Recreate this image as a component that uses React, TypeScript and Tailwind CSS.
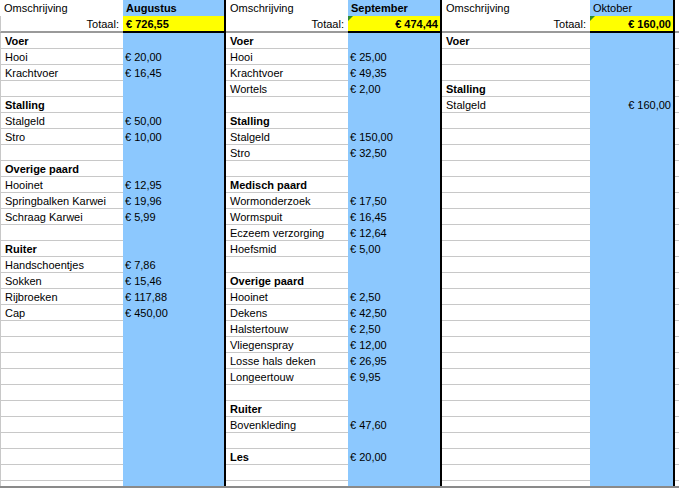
import React from 'react';

type Row = { label?: string; amount?: string; bold?: boolean };

interface Group {
  month: string;
  monthBold: boolean;
  total: string;
  totalRight: boolean;
  marker: boolean;
  descW: string;
  amtW: string;
  amountRight: boolean;
  leftLine: boolean;
  rows: Row[];
}

const h = (label: string): Row => ({ label, bold: true });
const r = (label: string, amount?: string): Row => ({ label, amount });
const e: Row = {};

const groups: Group[] = [
  {
    month: 'Augustus',
    monthBold: true,
    total: '€ 726,55',
    totalRight: false,
    marker: false,
    descW: 'w-[123px]',
    amtW: 'w-[101px]',
    amountRight: false,
    leftLine: true,
    rows: [
      h('Voer'),
      r('Hooi', '€ 20,00'),
      r('Krachtvoer', '€ 16,45'),
      e,
      h('Stalling'),
      r('Stalgeld', '€ 50,00'),
      r('Stro', '€ 10,00'),
      e,
      h('Overige paard'),
      r('Hooinet', '€ 12,95'),
      r('Springbalken Karwei', '€ 19,96'),
      r('Schraag Karwei', '€ 5,99'),
      e,
      h('Ruiter'),
      r('Handschoentjes', '€ 7,86'),
      r('Sokken', '€ 15,46'),
      r('Rijbroeken', '€ 117,88'),
      r('Cap', '€ 450,00'),
    ],
  },
  {
    month: 'September',
    monthBold: true,
    total: '€ 474,44',
    totalRight: true,
    marker: true,
    descW: 'w-[122px]',
    amtW: 'w-[92px]',
    amountRight: false,
    leftLine: false,
    rows: [
      h('Voer'),
      r('Hooi', '€ 25,00'),
      r('Krachtvoer', '€ 49,35'),
      r('Wortels', '€ 2,00'),
      e,
      h('Stalling'),
      r('Stalgeld', '€ 150,00'),
      r('Stro', '€ 32,50'),
      e,
      h('Medisch paard'),
      r('Wormonderzoek', '€ 17,50'),
      r('Wormspuit', '€ 16,45'),
      r('Eczeem verzorging', '€ 12,64'),
      r('Hoefsmid', '€ 5,00'),
      e,
      h('Overige paard'),
      r('Hooinet', '€ 2,50'),
      r('Dekens', '€ 42,50'),
      r('Halstertouw', '€ 2,50'),
      r('Vliegenspray', '€ 12,00'),
      r('Losse hals deken', '€ 26,95'),
      r('Longeertouw', '€ 9,95'),
      e,
      h('Ruiter'),
      r('Bovenkleding', '€ 47,60'),
      e,
      { label: 'Les', amount: '€ 20,00', bold: true },
    ],
  },
  {
    month: 'Oktober',
    monthBold: false,
    total: '€ 160,00',
    totalRight: true,
    marker: true,
    descW: 'w-[148px]',
    amtW: 'w-[83px]',
    amountRight: true,
    leftLine: false,
    rows: [h('Voer'), e, e, h('Stalling'), r('Stalgeld', '€ 160,00')],
  },
];

const ROWS = 29;

const SheetGroup: React.FC<{ g: Group }> = ({ g }) => {
  const rows = Array.from({ length: ROWS }, (_, i) => g.rows[i] ?? e);
  return (
    <div className="flex flex-col shrink-0 border-r-2 border-black">
      {/* header */}
      <div className="flex shrink-0 h-[16px] leading-[17px]">
        <div className={`${g.descW} pl-[4px] bg-white`}>Omschrijving</div>
        <div className={`${g.amtW} pl-[3px] bg-[#8cc8fe] ${g.monthBold ? 'font-bold' : ''}`}>{g.month}</div>
      </div>
      {/* totaal */}
      <div className="flex shrink-0 h-[17px]">
        <div
          className={`${g.descW} text-right pr-[4px] leading-[16px] bg-white border-b-2 border-[#9a9a9a] ${g.leftLine ? 'border-l border-l-[#c8c8c8]' : ''}`}
        >
          Totaal:
        </div>
        <div
          className={`${g.amtW} relative bg-[#ffff00] border-b-2 border-black font-bold leading-[16px] ${g.totalRight ? 'text-right pr-[2px]' : 'pl-[3px]'}`}
        >
          {g.marker && (
            <div className="absolute left-0 top-0 w-0 h-0 border-t-[5px] border-t-[#2e8b2e] border-r-[5px] border-r-transparent" />
          )}
          {g.total}
        </div>
      </div>
      {/* body */}
      {rows.map((row, i) => (
        <div key={i} className="flex shrink-0 h-[16px]">
          <div
            className={`${g.descW} pl-[4px] leading-[17px] bg-white border-b border-[#c8c8c8] whitespace-nowrap ${g.leftLine ? 'border-l border-l-[#c8c8c8] pl-[3px]' : ''} ${row.bold ? 'font-bold' : ''}`}
          >
            {row.label ?? ''}
          </div>
          <div
            className={`${g.amtW} bg-[#8cc8fe] leading-[17px] whitespace-nowrap ${g.amountRight ? 'text-right pr-[2px]' : 'pl-[2px]'}`}
          >
            {row.amount ?? ''}
          </div>
        </div>
      ))}
    </div>
  );
};

export default function App() {
  return (
    <div
      className="w-[679px] h-[488px] bg-white text-black text-[11px] overflow-hidden flex flex-col"
      style={{ fontFamily: '"Liberation Sans", Arial, sans-serif' }}
    >
      <div className="flex shrink-0 h-[486px] overflow-hidden">
        {groups.map((g) => (
          <SheetGroup key={g.month} g={g} />
        ))}
        <div className="flex-1 flex flex-col">
          <div className="h-[16px] shrink-0" />
          <div className="h-[17px] shrink-0 border-b-2 border-[#9a9a9a]" />
          {Array.from({ length: ROWS }, (_, i) => (
            <div key={i} className="h-[16px] shrink-0 border-b border-[#c8c8c8]" />
          ))}
        </div>
      </div>
      <div className="h-[2px] shrink-0 bg-[#8a8a8a]" />
    </div>
  );
}
